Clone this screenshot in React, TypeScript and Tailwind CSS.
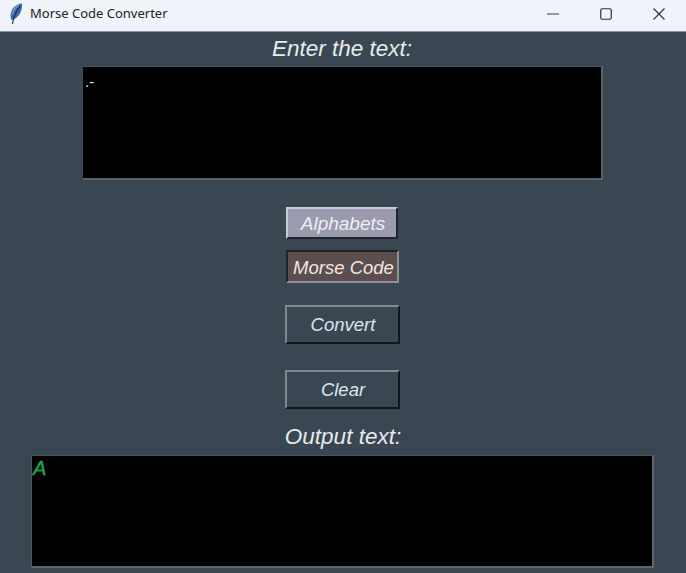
import React from "react";

const FONT = "font-['Liberation_Sans',Arial,sans-serif]";

function Feather() {
  return (
    <svg width="14" height="22" viewBox="0 0 14 22" className="shrink-0">
      <path d="M13 0.5 C8.5 0.5 3.5 4 2 9.5 C1.3 12.5 1.6 15 2.6 17 C7 16 10.5 12.5 12 8 C12.8 5.5 13.3 3 13 0.5 Z" fill="#3d6aa8" />
      <path d="M11.5 2.5 C8.5 6 5 11 3.4 21" fill="none" stroke="#26344d" strokeWidth="1.2" />
      <path d="M10 2.5 C6.5 4 4.5 7 3.4 11" fill="none" stroke="#86a8d6" strokeWidth="1.1" />
    </svg>
  );
}

export default function App() {
  return (
    <div className={`${FONT} w-[686px] h-[573px] overflow-hidden flex flex-col bg-[#3a4752]`}>
      <div className="h-[32px] shrink-0 flex items-center pb-[4px] bg-[#f0f3f9] border-b border-[#8c959d]">
        <div className="pl-[9px] pr-[7px] flex items-center">
          <Feather />
        </div>
        <span className="font-['Noto_Sans','Open_Sans',sans-serif] text-[13px] text-[#1f2226]">Morse Code Converter</span>
        <div className="ml-auto flex items-center h-full">
          <div className="w-[54px] flex justify-center">
            <svg width="12" height="2" viewBox="0 0 12 2"><path d="M0 1H12" stroke="#3a3d42" strokeWidth="1" /></svg>
          </div>
          <div className="w-[52px] flex justify-center">
            <svg width="12" height="12" viewBox="0 0 12 12"><rect x="0.75" y="0.75" width="10.5" height="10.5" rx="1.5" fill="none" stroke="#2c2f33" strokeWidth="1.2" /></svg>
          </div>
          <div className="w-[54px] flex justify-center">
            <svg width="12" height="12" viewBox="0 0 12 12"><path d="M0.5 0.5L11.5 11.5M11.5 0.5L0.5 11.5" stroke="#2c2f33" strokeWidth="1.1" /></svg>
          </div>
        </div>
      </div>

      <div className="flex flex-col items-center flex-1">
        <div className="h-[34px] mr-[2px] flex items-center text-[22.5px] italic text-[#e6ebee] leading-none">Enter the text:</div>
        <div className="w-[520px] h-[114px] bg-black border-r-2 border-b-2 border-[#5a6269] border-t border-t-[#4b545b] px-[2px] pt-[7px] text-[15px] leading-[16px] text-[#e8e8e8]">
          .-
        </div>

        <button className="mt-[27px] mr-[2px] w-[112px] h-[32px] bg-[#9c9aae] border-2 border-t-[#c5cbd3] border-l-[#c5cbd3] border-r-[#20262b] border-b-[#20262b] pl-[2px] text-[19px] italic text-[#eeeef2] leading-none">
          Alphabets
        </button>
        <button className="mt-[11px] mr-[2px] w-[113px] h-[33px] bg-[#5c4e4e] border-2 border-t-[#1f2226] border-l-[#1f2226] border-r-[#8b9299] border-b-[#8b9299] pt-[3px] pl-[3px] text-[18.5px] italic whitespace-nowrap text-[#eee7e2] leading-none">
          Morse Code
        </button>
        <button className="mt-[22px] mr-[2px] w-[115px] h-[39px] bg-[#3a4752] border-2 border-t-[#7d8991] border-l-[#7d8991] border-r-[#12181c] border-b-[#12181c] pt-[2px] pl-[2px] text-[18.5px] italic text-[#dce3e8] leading-none">
          Convert
        </button>
        <button className="mt-[26px] mr-[2px] w-[115px] h-[39px] bg-[#3a4752] border-2 border-t-[#7d8991] border-l-[#7d8991] border-r-[#12181c] border-b-[#12181c] pt-[2px] pl-[2px] text-[18.5px] italic text-[#dce3e8] leading-none">
          Clear
        </button>

        <div className="mt-[12px] mb-[2px] h-[32px] flex items-center text-[22.5px] italic text-[#e6ebee] leading-none">Output text:</div>
        <div className="w-[623px] mr-[1px] h-[113px] bg-black border-l border-l-[#4b545b] border-r-2 border-b-2 border-[#5f676e] border-t border-t-[#4b545b] pl-[1px] pt-[1px] text-[20px] leading-[22px] italic text-[#18a84f] [-webkit-text-stroke:0.4px_#18a84f]">
          A
        </div>
      </div>
    </div>
  );
}
